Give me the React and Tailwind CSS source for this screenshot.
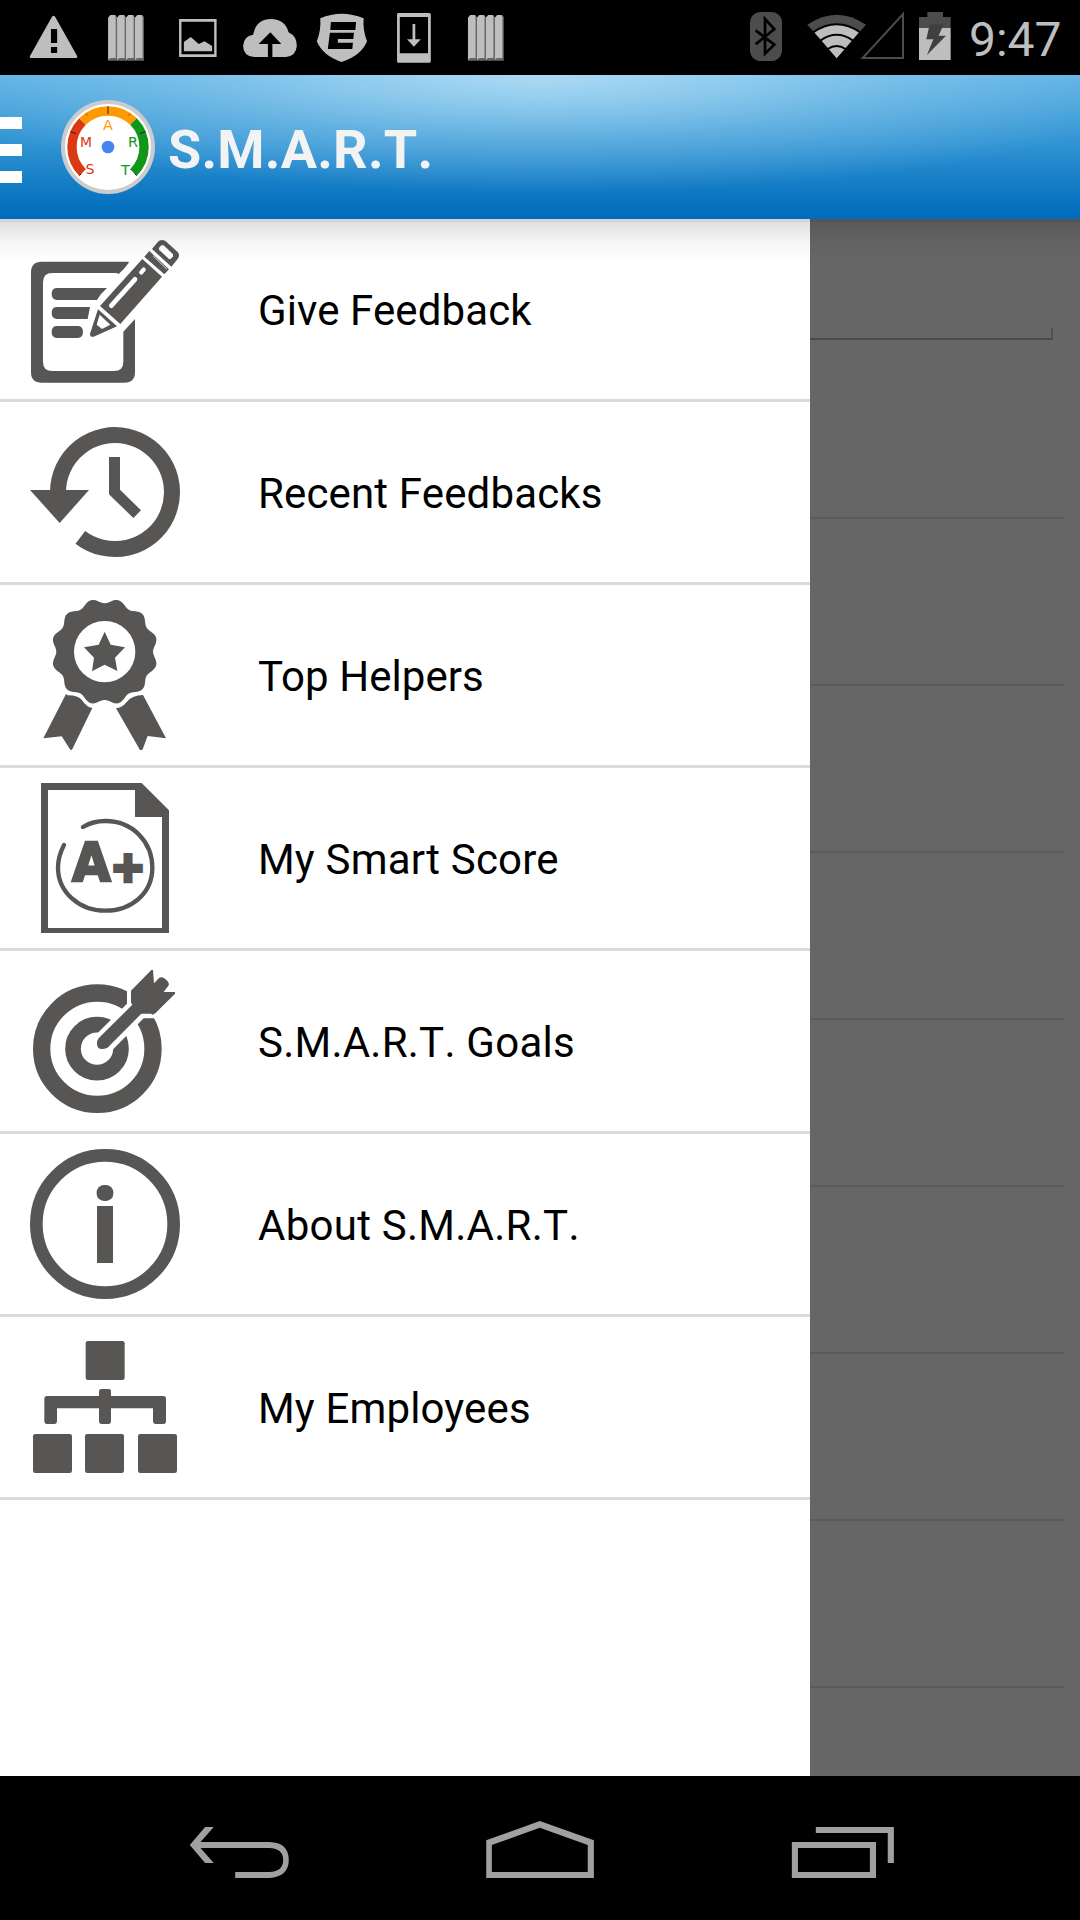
import React from 'react';

const INK = '#575654';

// scalloped edge of the award rosette
const rosette = Array.from({ length: 144 }, (_, i) => {
  const a = (i / 144) * Math.PI * 2;
  const r = 152.5 - 7.5 * Math.cos(12 * a);
  return `${(314 + r * Math.sin(a)).toFixed(1)},${(215 - r * Math.cos(a)).toFixed(1)}`;
}).join(' ');

function MenuIcon({ viewBox, children }) {
  return (
    <svg viewBox={viewBox} fill={INK} className="w-[150px] h-[150px] shrink-0">
      {children}
    </svg>
  );
}

const FeedbackIcon = () => (
  <MenuIcon viewBox="90 72 450 450">
    <path d="M386 155H125Q93 155 93 187V487Q93 518 125 518H373Q405 518 405 487V327L370 365V455Q370 483 342 483H157Q129 483 129 455V217Q129 189 157 189H350L356 192Q372 178 386 159Z" />
    <path d="M169 234H321Q303 249 291 270H169Q155 268 155 252T169 234ZM169 291H270L263 327H169Q155 325 155 309T169 291ZM169 348H235Q249 350 249 366T235 384H169Q155 382 155 366T169 348Z" />
    <path d="M427 147L486 200L361 342L300 288Z" />
    <path d="M448 123L507 178L493 193L433 140Z" />
    <path d="M456 117L474 95Q478 90 486 90Q494 90 499 95L532 125Q537 129 537 136Q537 142 533 147L514 170Z" />
    <path d="M294 298L351 349L281 380Q269 382 270 371Z" />
    <g fill="none" stroke="#fff">
      <path d="M405 208L334 287" strokeWidth="14" strokeLinecap="round" />
      <path d="M424 187L431 179" strokeWidth="13" strokeLinecap="round" />
      <path d="M459 137L501 178" strokeWidth="2.5" />
    </g>
    <path d="M484 106H491L519 133V139L512 147H507L477 119V113Z" fill="#fff" />
    <path d="M299 314L331 344L306 357L290 344Z" fill="#fff" />
  </MenuIcon>
);

const RecentIcon = () => (
  <MenuIcon viewBox="90 51 450 450">
    <path d="M174 275A171 171 0 1 1 241 412" fill="none" stroke={INK} strokeWidth="48" />
    <path d="M90 270H267L179 369Z" />
    <path d="M327 171H360V269L423 331L400 354L327 283Z" />
  </MenuIcon>
);

const HelpersIcon = () => (
  <MenuIcon viewBox="90 60 450 450">
    <polygon points={rosette} />
    <circle cx="314" cy="215" r="92" fill="#fff" />
    <path d="M314 155L332 194L375 202L345 233L352 273L314 254L276 274L282 233L252 202L296 194Z" />
    <path d="M198 342L203 346Q235 346 246 361Q260 382 277 384L216 509H211L185 469L130 475Z" />
    <path d="M429 345L498 475L443 468L427 510H420L348 385Q366 384 380 366Q395 346 429 345Z" />
  </MenuIcon>
);

const ScoreIcon = () => (
  <MenuIcon viewBox="90 69 450 450">
    <path fillRule="evenodd" d="M123 69H425L507 151V519H123ZM144 90V504H486V171H405V90Z" />
    <path d="M249 201C270 188 292 183 316 183C400 183 457 248 457 323C457 400 394 452 316 452C238 452 174 396 174 323C174 298 181 276 192 255" fill="none" stroke={INK} strokeWidth="13" strokeLinecap="round" />
    <text x="217" y="363" fontSize="158" textLength="115" lengthAdjust="spacingAndGlyphs" stroke={INK} strokeWidth="8" className="font-['DejaVu_Sans'] font-bold">A</text>
    <text x="333" y="364" fontSize="124" textLength="102" lengthAdjust="spacingAndGlyphs" stroke={INK} strokeWidth="13" className="font-['DejaVu_Sans'] font-bold">+</text>
  </MenuIcon>
);

const GoalsIcon = () => (
  <MenuIcon viewBox="90 48 450 450">
    <circle cx="292" cy="296" r="167" fill="none" stroke={INK} strokeWidth="52" />
    <circle cx="291" cy="296" r="72" fill="none" stroke={INK} strokeWidth="47" />
    {/* gap around the arrow */}
    <path d="M381 100V161L285 257L300 310L335 302L431 205L500 205L520 100Z" fill="#fff" />
    <path d="M393 122L454 60H459L462 100L475 86Q484 77 496 87Q512 100 504 109L491 126H525V131L466 190L458 194L453 191H424L327 289Q321 297 306 297Q291 297 291 281Q290 272 296 265L397 164L393 158Z" />
  </MenuIcon>
);

const AboutIcon = () => (
  <MenuIcon viewBox="90 57 450 450">
    <circle cx="315" cy="282" r="206" fill="none" stroke={INK} strokeWidth="38" />
    <rect x="290" y="165" width="50" height="48" rx="22" />
    <rect x="291" y="228" width="48" height="171" />
  </MenuIcon>
);

const EmployeesIcon = () => (
  <MenuIcon viewBox="90 606 450 450">
    <rect x="257" y="633" width="117" height="117" rx="7" />
    <rect x="99" y="912" width="117" height="117" rx="7" />
    <rect x="255" y="912" width="117" height="117" rx="7" />
    <rect x="414" y="912" width="117" height="117" rx="7" />
    <path d="M141 798H297V784Q297 777 304 777H326Q333 777 333 784V798H489Q498 798 498 806V874Q498 882 490 882H468Q459 882 459 873V835H333V873Q333 882 325 882H305Q297 882 297 873V835H171V873Q171 882 163 882H141Q133 882 133 873V806Q133 798 141 798Z" />
  </MenuIcon>
);

const menuItems = [
  { label: 'Give Feedback', Icon: FeedbackIcon, spacing: 'tracking-[0.1px]' },
  { label: 'Recent Feedbacks', Icon: RecentIcon, spacing: 'tracking-[0.15px]' },
  { label: 'Top Helpers', Icon: HelpersIcon, spacing: 'tracking-[0.05px]' },
  { label: 'My Smart Score', Icon: ScoreIcon, spacing: 'tracking-[0.2px]' },
  { label: 'S.M.A.R.T. Goals', Icon: GoalsIcon, spacing: 'tracking-[0.24px] [font-kerning:none]' },
  { label: 'About S.M.A.R.T.', Icon: AboutIcon, spacing: 'tracking-[0.26px] [font-kerning:none]' },
  { label: 'My Employees', Icon: EmployeesIcon, spacing: 'tracking-[0.15px]' },
];

const Bars = ({ x }) => (
  <>
    {[0, 26, 52, 78].map((dx) => (
      <g key={dx}>
        <path d={`M${x + dx} 53L${x + dx + 7} 45H${x + dx + 22}L${x + dx + 26} 52V182H${x + dx}Z`} fill="#666" />
        <path d={`M${x + dx} 53L${x + dx + 7} 45H${x + dx + 19}L${x + dx + 22} 50V174H${x + dx + 6}L${x + dx} 180Z`} />
      </g>
    ))}
  </>
);

const notifications = [
  <path fillRule="evenodd" d="M151 50Q155 44 160 50L224 168Q226 174 220 174H91Q85 174 87 168ZM148 87V129H166V87ZM148 141V159H166V141Z" />,
  <Bars x={314} />,
  <>
    <path fillRule="evenodd" d="M520 57H629V171H520ZM527 65V163H622V65Z" />
    <path d="M534 126L554 111L577 132L594 124L616 138V154H534Z" />
  </>,
  <path d="M738 171Q706 168 706 137Q708 108 735 104Q744 57 787 57Q828 58 838 97Q862 109 862 137Q860 168 830 171H791V132H817L785 97L751 132H778V171Z" />,
  <path fillRule="evenodd" d="M930 55Q992 28 1056 55Q1053 90 1066 124Q1048 168 992 186Q938 168 920 124Q933 90 930 55ZM961 66L959 90H1032L1034 66ZM958 98L952 147H1023L1025 128H981V117H1026L1028 98Z" />,
  <>
    <path fillRule="evenodd" d="M1156 39H1248L1251 42V185L1248 188H1156L1153 185V42ZM1161 51V160H1243V51Z" />
    <path d="M1198 72H1206V118H1222L1202 140L1182 118H1198Z" />
  </>,
  <Bars x={1359} />,
];

function StatusBar() {
  return (
    <div className="h-[75px] bg-black flex justify-between">
      <div className="flex pl-[18px]">
        {notifications.map((shape, i) => (
          <svg key={i} viewBox={`${52.27 + 209.09 * i} 0 209.09 225`} preserveAspectRatio="none" fill="#bebebe" className="w-[72px] h-[75px]">
            {shape}
          </svg>
        ))}
      </div>
      <div className="flex w-[340px]">
        {/* Bluetooth */}
        <svg viewBox="60 0 180 225" className="w-[60px] h-[75px]">
          <rect x="90" y="36" width="96" height="147" rx="32" fill="#4c4c4c" />
          <path d="M107 91L163 134L135 161V57L163 87L107 133" fill="none" stroke="#000" strokeWidth="8" />
        </svg>
        {/* Wi-Fi */}
        <svg viewBox="240 0 180 225" className="w-[60px] h-[75px] overflow-visible">
          <path d="M350 174L262 74Q350 14 438 74Z" fill="#4c4c4c" />
          <path d="M350 175L283 97Q350 50 417 97Z" fill="#bebebe" />
          <g fill="none" stroke="#000" strokeWidth="6">
            <path d="M279 97Q350 48 421 97" />
            <path d="M302 121Q350 88 398 121" />
            <path d="M323 147Q350 129 377 147" />
          </g>
        </svg>
        {/* Signal */}
        <svg viewBox="420 0 165 225" className="w-[55px] h-[75px]">
          <path d="M428 174H549V42Z" fill="none" stroke="#4c4c4c" strokeWidth="6" />
        </svg>
        {/* Battery */}
        <svg viewBox="585 0 120 225" className="w-[40px] h-[75px]">
          <path d="M597 84V51H622V36H669V51H692V84Z" fill="#4c4c4c" />
          <path d="M597 84H692V180H597Z" fill="#bebebe" />
          <path d="M629 73H671L656 107H678L621 165L640 118H619Z" fill="#404040" />
        </svg>
        <span className="pl-[14px] pt-[2px] font-['Roboto'] text-[48px] leading-[75px] text-[#bebebe]">9:47</span>
      </div>
    </div>
  );
}

function GaugeLogo() {
  return (
    <svg viewBox="184 90 282 282" className="w-[94px] h-[94px] shrink-0">
      <circle cx="325" cy="231" r="141" fill="#ccc" />
      <circle cx="325" cy="231" r="129" fill="#fff" />
      <g fill="none" strokeWidth="28">
        <path d="M248.6 307.4A108 108 0 0 1 248.6 154.6" stroke="#dc3912" />
        <path d="M248.6 154.6A108 108 0 0 1 401.4 154.6" stroke="#ff9900" />
        <path d="M401.4 154.6A108 108 0 0 1 401.4 307.4" stroke="#109618" />
      </g>
      <g stroke="#222" strokeWidth="3">
        <path d="M325 109V132M213 185L229 191M437 185L421 191M239 317L245 311M411 317L405 311" />
        <path d="M259 131L264 137M391 131L386 137M213 254L219 252M437 254L431 252" stroke="#666" />
      </g>
      <circle cx="325" cy="231" r="19" fill="#4684ee" />
      <g fontSize="43" textAnchor="middle" className="font-['DejaVu_Sans']">
        <text x="271" y="313" fill="#dc3912">S</text>
        <text x="259" y="231" fill="#dc3912" textLength="36" lengthAdjust="spacingAndGlyphs">M</text>
        <text x="325" y="180" fill="#ff9900">A</text>
        <text x="400" y="231" fill="#109618">R</text>
        <text x="377" y="315" fill="#109618">T</text>
      </g>
    </svg>
  );
}

function ActionBar() {
  return (
    <header className="h-[144px] flex items-center bg-[radial-gradient(ellipse_640px_118px_at_50%_0%,rgba(190,228,248,0.82),rgba(190,228,248,0.3)_55%,rgba(190,228,248,0)),linear-gradient(to_bottom,#5bb0e3,#3093d3_48%,#006cbb_97%)]">
      <div className="w-[21.5px] flex flex-col gap-[15px] mr-[39.5px] mt-[6px]">
        <div className="h-3 bg-white"></div>
        <div className="h-3 bg-white"></div>
        <div className="h-3 bg-white"></div>
      </div>
      <GaugeLogo />
      <h1 className="ml-[13px] pt-[4px] font-['Roboto'] font-bold text-[54px] text-[#f3f3f3] tracking-[0.22px] [font-kerning:none]">S.M.A.R.T.</h1>
    </header>
  );
}

function Drawer() {
  return (
    <nav className="w-[810px] bg-white">
      {menuItems.map(({ label, Icon, spacing }) => (
        <div key={label} className="h-[183px] border-b-3 border-[#dadada] pl-[30px] flex items-center">
          <Icon />
          <span className={`pl-[78px] pt-[2px] font-['Roboto'] text-[42px] text-black ${spacing}`}>{label}</span>
        </div>
      ))}
    </nav>
  );
}

// form behind the open drawer, dimmed
function DimmedContent() {
  return (
    <div className="flex-1 bg-[#666] overflow-hidden">
      <div className="h-[109px]"></div>
      <div className="w-[243px] h-3 border-b-2 border-b-[#4a4a4a] border-r-2 border-r-[#525252]"></div>
      <div className="h-[12px]"></div>
      {Array.from({ length: 8 }, (_, i) => (
        <div key={i} className="w-[255px] h-[167px] border-b-2 border-[#5b5b5b]"></div>
      ))}
    </div>
  );
}

function NavBar() {
  return (
    <div className="h-[144px] bg-black pl-[90px] flex">
      <svg viewBox="-117.6 48 588 432" preserveAspectRatio="none" fill="#a0a0a0" className="w-[300px] h-[144px]">
        <path d="M108 201H125L99 246H234Q272 248 272 300Q272 350 234 354H167V336H234Q261 334 261 300Q261 266 234 264H99L125 309H108L78 255Z" />
      </svg>
      <svg viewBox="470.4 48 588 432" preserveAspectRatio="none" fill="#a0a0a0" className="w-[300px] h-[144px]">
        <path fillRule="evenodd" d="M764 183L870 241V354H659V241ZM764 203L670 255V336H858V255Z" />
      </svg>
      <svg viewBox="1058.4 48 588 432" preserveAspectRatio="none" fill="#a0a0a0" className="w-[300px] h-[144px]">
        <path fillRule="evenodd" d="M1258 246H1423V354H1258ZM1270 264V336H1411V264Z" />
        <path d="M1305 201H1458V309H1446V219H1305Z" />
      </svg>
    </div>
  );
}

export default function App() {
  return (
    <div className="w-[1080px] h-[1920px] flex flex-col overflow-hidden">
      <StatusBar />
      <ActionBar />
      <main className="relative flex-1 flex">
        <Drawer />
        <DimmedContent />
        {/* Action bar shadow */}
        <div className="absolute inset-x-0 top-0 h-[42px] border-t-3 border-black/17 bg-clip-padding bg-linear-to-b from-black/12 via-black/4 to-transparent"></div>
      </main>
      <NavBar />
    </div>
  );
}
